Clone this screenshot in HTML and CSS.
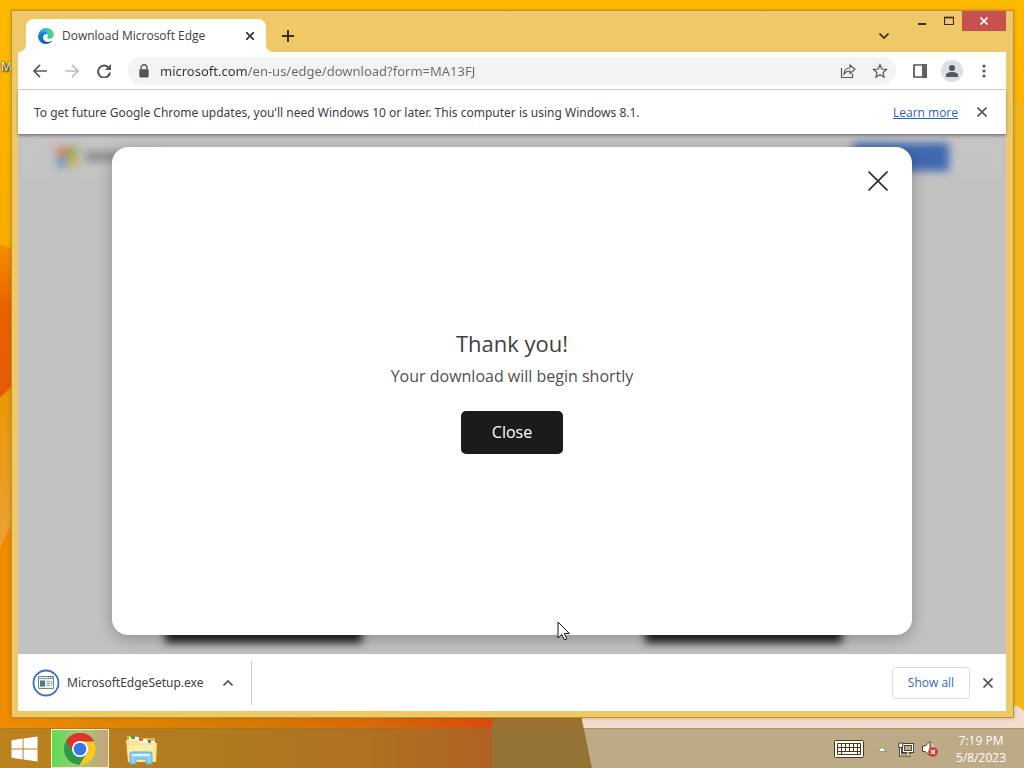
FILE: index.html
```html
<!DOCTYPE html>
<html lang="en">
<head>
<meta charset="utf-8">
<meta name="viewport" content="width=device-width, initial-scale=1">
<title>Download Microsoft Edge</title>
<link rel="stylesheet" href="styles.css">
</head>
<body>
<div class="desktop">
  <svg class="wallpaper" viewBox="0 0 1024 768" preserveAspectRatio="none" aria-hidden="true">
    <defs>
      <linearGradient id="sky" x1="0" y1="0" x2="0" y2="1"><stop offset="0" stop-color="#ffba00"/><stop offset=".3" stop-color="#f9ad00"/><stop offset="1" stop-color="#f3a400"/></linearGradient>
      <linearGradient id="flame" x1="0" y1="0" x2="0" y2="1"><stop offset="0" stop-color="#f59000"/><stop offset=".4" stop-color="#e96300"/><stop offset="1" stop-color="#e65a08"/></linearGradient>
      <linearGradient id="glow" x1="0" y1="0" x2="0" y2="1"><stop offset="0" stop-color="#eb9600"/><stop offset="1" stop-color="#eba238"/></linearGradient>
      <linearGradient id="ground" x1="0" y1="0" x2="1" y2="0"><stop offset="0" stop-color="#ef8c00"/><stop offset=".45" stop-color="#d97c00"/><stop offset=".75" stop-color="#d96a08"/><stop offset="1" stop-color="#d84d0c"/></linearGradient>
    </defs>
    <rect width="1024" height="768" fill="url(#sky)"/>
    <path d="M0 245Q12 246 22 254V380L0 398Z" fill="url(#flame)"/>
    <path d="M0 398 22 376V510L0 550Z" fill="url(#glow)"/>
    <path d="M0 548 22 500V700H492V768H0Z" fill="url(#ground)"/>
    <path d="M492 700H578L592 768H492Z" fill="#9f712f"/>
    <path d="M578 700H1014L1024 710V768H592Z" fill="#f3ddd0"/>
    <path d="M1012 100H1024V711Q1018 704 1012 706Z" fill="#f7b51c"/>
  </svg>
  <span class="desk-label" aria-hidden="true">M</span>

  <main class="workspace">
    <div class="window">
      <header class="titlebar">
        <div class="tab">
          <svg class="icon-16" viewBox="0 0 16 16" aria-hidden="true">
            <defs>
              <linearGradient id="ea" x1="0" y1="0" x2="1" y2="0"><stop offset="0" stop-color="#2a9fe0"/><stop offset=".55" stop-color="#2fc4c9"/><stop offset="1" stop-color="#62d957"/></linearGradient>
              <linearGradient id="eb" x1="0" y1="0" x2="1" y2="1"><stop offset="0" stop-color="#1690d8"/><stop offset="1" stop-color="#0c4a9c"/></linearGradient>
            </defs>
            <path d="M.3 7.3C.9 3 4.200 0 8.200 0c4.500 0 7.700 3.200 7.700 6.600 0 2.500-1.900 4.100-4.200 4.100-1.800 0-2.700-.5-2.700-1 0-.3.9-.7.9-2 0-1.700-1.600-3.300-4-3.300-2.600 0-4.600 1-5.600 2.900z" fill="url(#ea)"/>
            <path d="M0 8c.4-2.400 2.800-3.900 5.400-3.900 2 0 3.500.8 4.200 2C6.800 5.600 5 7.500 5 9.600c0 3 3 5.500 7.300 3.800.8-.3 1.500-.6 1.900-.3.300.3-2.400 2.900-6.200 2.900-4.700 0-8-3.500-8-8z" fill="url(#eb)"/>
          </svg>
          <span class="tab-title">Download Microsoft Edge</span>
          <button class="icon-button small" aria-label="Close tab"><svg class="icon-8" viewBox="0 0 8 8"><path d="M0 0 8 8M8 0 0 8" class="stroke dark"/></svg></button>
        </div>
        <button class="icon-button new-tab" aria-label="New tab"><svg class="icon-12" viewBox="0 0 12 12"><path d="M6 0V12M0 6H12" class="stroke brown thick"/></svg></button>
        <button class="icon-button tab-search" aria-label="Search tabs"><svg class="icon-10" viewBox="0 0 10 10"><path d="M.5 2.500 5 7 9.500 2.500" class="stroke brown"/></svg></button>
        <div class="caption">
          <button class="caption-button" aria-label="Minimize"><svg class="icon-10" viewBox="0 0 10 10"><path d="M1 8h8" class="stroke brown thick"/></svg></button>
          <button class="caption-button" aria-label="Maximize"><svg class="icon-10" viewBox="0 0 10 10"><path d="M.5 1.500h9v7h-9z" class="stroke brown thin"/><path d="M0 1.500h10" class="stroke brown"/></svg></button>
          <button class="caption-button close" aria-label="Close window"><svg class="icon-8" viewBox="0 0 8 8"><path d="M.5.5 7.500 7.500M7.500.5.5 7.500" class="stroke white"/></svg></button>
        </div>
      </header>

      <nav class="toolbar" aria-label="Browser toolbar">
        <button class="icon-button" aria-label="Back"><svg class="icon-14" viewBox="0 0 14 14"><path d="M14 7H1.500M7 .8.900 7 7 13.200" class="stroke grey"/></svg></button>
        <button class="icon-button" aria-label="Forward" disabled><svg class="icon-14" viewBox="0 0 14 14"><path d="M0 7h12.500M7 .8 13.100 7 7 13.200" class="stroke pale"/></svg></button>
        <button class="icon-button" aria-label="Reload"><svg class="icon-14" viewBox="0 0 14 14"><path d="M12 4.200A6 6 0 1 0 13 8.500" class="stroke grey thick"/><path d="M14 0v6H8z" fill="#54575b"/></svg></button>
        <div class="omnibox">
          <svg class="lock" viewBox="0 0 10 12" aria-hidden="true"><path d="M2.500 5V3.200a2.500 2.500 0 0 1 5 0V5" class="stroke grey thin"/><rect x="1" y="4.500" width="8" height="7" rx="1" fill="#505357"/></svg>
          <div class="address-wrap"><input class="address" type="text" aria-label="Address" value="microsoft.com/en-us/edge/download?form=MA13FJ" spellcheck="false"></div>
          <button class="icon-button" aria-label="Share"><svg class="icon-16" viewBox="0 0 16 16"><path d="M1.500 5v9.500h11v-4M4 11c.3-4 2.500-6 6-6V2l5 4.300-5 4.200V8C7.500 8 5.500 9 4 11z" class="stroke grey thin"/></svg></button>
          <button class="icon-button" aria-label="Bookmark this tab"><svg class="icon-16" viewBox="0 0 16 16"><path d="M8 1.800 9.800 6l4.700.4-3.500 3.100 1 4.600L8 11.700l-4 2.400 1-4.600L1.500 6.400 6.200 6z" class="stroke grey thin"/></svg></button>
        </div>
        <button class="icon-button" aria-label="Side panel"><svg class="icon-14" viewBox="0 0 14 14"><path d="M1 1h12v12H1z" class="stroke grey"/><path d="M9 0h5v14H9z" fill="#5f6368"/></svg></button>
        <button class="icon-button profile" aria-label="Profile"><svg class="icon-14" viewBox="0 0 14 14"><circle cx="7" cy="4" r="3" fill="#54585e"/><path d="M1 13v-2c0-2 3-3 6-3s6 1 6 3v2z" fill="#54585e"/></svg></button>
        <button class="icon-button" aria-label="Menu"><svg class="icon-14" viewBox="0 0 14 14"><g fill="#54575b"><circle cx="7" cy="2" r="1.600"/><circle cx="7" cy="7" r="1.600"/><circle cx="7" cy="12" r="1.600"/></g></svg></button>
      </nav>

      <aside class="infobar">
        <span class="infobar-text">To get future Google Chrome updates, you'll need Windows 10 or later. This computer is using Windows 8.1.</span>
        <a class="link" href="#learn">Learn more</a>
        <button class="icon-button small" aria-label="Dismiss"><svg class="icon-10" viewBox="0 0 10 10"><path d="M.5.5 9.500 9.500M9.500.5.500 9.500" class="stroke grey"/></svg></button>
      </aside>

      <section class="page">
        <div class="backdrop" aria-hidden="true">
          <div class="backdrop-header">
            <svg class="ms-logo" viewBox="0 0 20 20"><path fill="#d87555" d="M0 0h9.500v9.500H0z"/><path fill="#8ba33b" d="M10.500 0H20v9.500h-9.500z"/><path fill="#5599bf" d="M0 10.500h9.500V20H0z"/><path fill="#cfae48" d="M10.500 10.500H20V20h-9.500z"/></svg>
            <span class="backdrop-word"></span>
            <span class="backdrop-action"></span>
          </div>
          <div class="backdrop-footer"><span class="backdrop-pill"></span><span class="backdrop-pill"></span></div>
        </div>
        <div class="dialog" role="dialog" aria-labelledby="thanks">
          <button class="dialog-x" aria-label="Close dialog"><svg class="icon-20" viewBox="0 0 20 20"><path d="M.5.500 19.500 19.500M19.500.500.500 19.500" class="stroke dark"/></svg></button>
          <div class="dialog-body">
            <h1 class="dialog-title" id="thanks">Thank you!</h1>
            <p class="dialog-text">Your download will begin shortly</p>
            <button class="dialog-close">Close</button>
          </div>
        </div>
      </section>

      <footer class="downloads">
        <button class="download-item">
          <svg class="file-icon" viewBox="0 0 28 28" aria-hidden="true"><circle cx="14" cy="14" r="12.500" fill="#fff" stroke="#3a6dc4" stroke-width="1.800"/><path d="M6.500 7.500h15v12h-15z" fill="#edf2f3" stroke="#74858d"/><path d="M7 9.500h14" stroke="#8d9ca3"/><path d="M8 11.500h5v6H8z" fill="#41837b"/><path d="M14.500 12.500H18M14.500 14.500H18M14.500 16.500H18M19.500 12v4" stroke="#8aa5ac"/><path d="M16 8h1M18 8h1M20 8h1" stroke="#315e8f"/></svg>
          <span>MicrosoftEdgeSetup.exe</span>
          <svg class="icon-10" viewBox="0 0 10 10" aria-hidden="true"><path d="M.5 7.500 5 3 9.500 7.500" class="stroke grey"/></svg>
        </button>
        <button class="show-all">Show all</button>
        <button class="icon-button small" aria-label="Close downloads bar"><svg class="icon-10" viewBox="0 0 10 10"><path d="M.5.5 9.500 9.500M9.500.5.500 9.500" class="stroke grey"/></svg></button>
      </footer>
    </div>
  </main>

  <footer class="taskbar">
    <button class="task start" aria-label="Start"><svg class="windows" viewBox="0 0 28 26"><path fill="#fff" d="M.5 4 12 2.200V12.500H.5zM13 2 27.500 0V12.500H13zM.5 13.500H12V23.800L.5 22zM13 13.500H27.500V26L13 24z"/></svg></button>
    <button class="task active" aria-label="Google Chrome"><svg class="task-icon" viewBox="0 0 32 32"><circle cx="16" cy="16" r="16" fill="#2c9b49"/><path d="M2.100 8A16 16 0 0 1 29.900 8L16 9 9.500 19.500z" fill="#df3528"/><path d="M16 8.500H30.100A16 16 0 0 1 15.500 32L23 19.500z" fill="#fcc72b"/><circle cx="16" cy="16" r="8" fill="#fff"/><circle cx="16" cy="16" r="6.300" fill="#3478e5"/></svg></button>
    <button class="task" aria-label="File Explorer"><svg class="task-icon" viewBox="0 0 32 32"><path d="M1 3h9l2 2h17v7H1z" fill="#d8b64e"/><path d="M3 4h10v6H3zM12 6h9v5h-9zM20 8h9v5h-9z" fill="#fffbea"/><path d="M5 3h4v3H5z" fill="#3ba543"/><path d="M13 5h4v3h-4z" fill="#e46642"/><path d="M22 7h3v3h-3z" fill="#4c84bb"/><path d="M0 7h11l3 3h17l-1 19H2z" fill="#f8e590"/><path d="M2 12h27l-1 16H3z" fill="#fbedaa"/><path d="M4 31V21q0-2 2-2h18q2 0 2 2v10h-6v-5H10v5z" fill="#90cff0" stroke="#62a9d6"/><path d="M6 22h18" stroke="#d8f3ff" stroke-width="2"/></svg></button>
    <div class="tray">
      <button class="tray-button" aria-label="Touch keyboard"><svg class="keyboard" viewBox="0 0 30 18"><rect x=".5" y=".5" width="29" height="17" rx="1" fill="#fffaf0" stroke="#493a22"/><path d="M3.500 3.500h23v11h-23zM3.500 7.500h23M3.500 11.500h23M7.500 3.500v11M11.500 3.500v8M15.500 3.500v8M19.500 3.500v8M23.500 3.500v11" fill="none" stroke="#493a22"/></svg></button>
      <button class="tray-button" aria-label="Show hidden icons"><svg class="icon-10" viewBox="0 0 10 10"><path d="M.5 7.500 5 3 9.500 7.500z" fill="#fff" stroke="#77654a" stroke-width=".6"/></svg></button>
      <button class="tray-button" aria-label="Network"><svg class="icon-16" viewBox="0 0 16 16"><path d="M5.500 3.500h9v7h-9zM10 10.500v3M7 14h6M2.500 7v7H7" fill="none" stroke="#4b3b24" stroke-width="3"/><path d="M5.500 3.500h9v7h-9zM10 10.500v3M7 14h6M2.500 7v7H7" fill="none" stroke="#fff" stroke-width="1.200"/><path d="M.8 2h4v4.500h-4z" fill="#fff" stroke="#4b3b24"/></svg></button>
      <button class="tray-button" aria-label="Volume muted"><svg class="icon-16" viewBox="0 0 16 16"><path d="M.5 5H3l5-4.500v14L3 10.500H.5z" fill="#fff" stroke="#54442b"/><path d="M10 3.500q2 2 1.500 4" fill="none" stroke="#fff"/><circle cx="11" cy="11" r="4.800" fill="#d23a30"/><path d="m9 9 4 4m0-4-4 4" stroke="#fff" stroke-width="1.500"/></svg></button>
      <time class="clock" datetime="2023-05-08T19:19"><span>7:19 PM</span><span>5/8/2023</span></time>
    </div>
  </footer>
  <svg class="cursor" viewBox="0 0 14 20" aria-hidden="true"><path d="M1 1v16l3.800-3.600L7.400 19l2.400-1.100-2.500-5.400h5z" fill="#fff" stroke="#111"/></svg>
</div>
</body>
</html>
```
FILE: styles.css
```css
* { box-sizing: border-box; }
body { margin: 0; font-family: "Open Sans", "Noto Sans", sans-serif; font-size: 12px; color: #3c4043; }
button { margin: 0; padding: 0; border: 0; background: none; color: inherit; font: inherit; }
svg { display: block; flex: none; }

.desktop { position: relative; display: flex; flex-direction: column; min-height: 100vh; overflow: hidden; background: #f9ad00; }
.wallpaper { position: absolute; inset: 0; width: 100%; height: 100%; }
.desk-label { position: absolute; left: 1px; top: 58px; color: #fff; text-shadow: 1px 1px 2px #000, 0 0 2px #000; }
.workspace { position: relative; display: flex; flex: 1; padding: 10px 10px 10px 11px; }
.window { display: flex; flex: 1; flex-direction: column; min-width: 0; padding: 0 7px 6px 6px; border: 1px solid #bd902e; background: #efc968; box-shadow: 0 0 4px #805d1866; }

.stroke { fill: none; stroke-width: 1.7; }
.thin { stroke-width: 1.2; }
.thick { stroke-width: 2; }
.dark { stroke: #303236; }
.brown { stroke: #42280d; }
.grey { stroke: #54575b; }
.pale { stroke: #babcbe; }
.white { stroke: #fff; }
.icon-8 { width: 8px; height: 8px; }
.icon-10 { width: 10px; height: 10px; }
.icon-12 { width: 12px; height: 12px; }
.icon-14 { width: 14px; height: 14px; }
.icon-16 { width: 16px; height: 16px; }
.icon-20 { width: 20px; height: 20px; }
.icon-button { display: grid; flex: none; place-items: center; width: 32px; height: 28px; }
.small { width: 16px; height: 16px; }

.titlebar { display: flex; align-items: flex-end; height: 41px; padding-left: 8px; }
.tab { position: relative; display: flex; align-items: center; gap: 8px; width: 240px; height: 33px; padding: 0 8px 0 12px; border-radius: 8px 8px 0 0; background: #fff; }
.tab::before, .tab::after { content: ""; position: absolute; bottom: 0; width: 8px; height: 8px; }
.tab::before { left: -8px; background: radial-gradient(circle at 0 0, transparent 8px, #fff 8px); }
.tab::after { right: -8px; background: radial-gradient(circle at 100% 0, transparent 8px, #fff 8px); }
.tab-title { flex: 1; white-space: nowrap; }
.new-tab { width: 44px; height: 33px; }
.tab-search { margin-left: auto; height: 33px; }
.caption { display: flex; align-self: flex-start; margin-left: 8px; }
.caption-button { display: grid; place-items: center; width: 27px; height: 20px; }
.caption-button.close { width: 44px; background: #c75050; }

.toolbar { display: flex; align-items: center; height: 38px; padding: 0 6px; border-bottom: 1px solid #d8dadd; background: #fff; }
.omnibox { display: flex; flex: 1; align-items: center; min-width: 0; height: 28px; margin-left: 8px; margin-right: 8px; padding-left: 10px; border-radius: 14px; background: #f1f3f4; }
.lock { width: 12px; height: 14px; }
.address-wrap { flex: 1; min-width: 0; padding-left: 10px; }
.address { display: block; width: 100%; padding: 0; border: 0; outline: 0; color: transparent; background: linear-gradient(90deg, #303236 87px, #65696e 87px); background-clip: text; font: 13px/28px "Noto Sans", sans-serif; }
.profile { width: 22px; height: 22px; margin: 0 5px; border-radius: 50%; background: #dddfe6; }

.infobar { position: relative; z-index: 1; display: flex; align-items: center; gap: 16px; min-height: 45px; padding: 0 16px; border-bottom: 1px solid #888; background: #fff; box-shadow: 0 1px 3px #0005; }
.infobar-text { flex: 1; font-family: "Noto Sans", sans-serif; }
.link { color: #2467b5; text-decoration: underline; text-underline-offset: 1px; }

.page { position: relative; display: flex; flex: 1; justify-content: center; padding: 12px 94px 19px; overflow: hidden; background: #c2c2c2; }
.backdrop { position: absolute; inset: 0; display: flex; flex-direction: column; justify-content: space-between; filter: blur(4px); }
.backdrop-header { display: flex; align-items: center; gap: 8px; height: 44px; padding: 0 57px 0 39px; border-bottom: 1px solid #b8b8b8; background: #c4c4c4; }
.ms-logo { width: 20px; height: 20px; }
.backdrop-word { width: 80px; height: 9px; background: #888; }
.backdrop-action { width: 96px; height: 28px; margin-left: auto; background: #4068b0; }
.backdrop-footer { display: flex; justify-content: space-between; padding: 0 164px 11px 147px; }
.backdrop-pill { width: 197px; height: 30px; background: #222; }
.dialog { position: relative; display: flex; flex: 1; align-items: center; justify-content: center; border-radius: 16px; background: #fff; box-shadow: 0 4px 16px #0004; }
.dialog-x { position: absolute; top: 16px; right: 16px; display: grid; place-items: center; width: 36px; height: 36px; }
.dialog-body { display: flex; flex-direction: column; align-items: center; padding-bottom: 4px; }
.dialog-title { margin: 0; font-size: 22px; font-weight: 400; line-height: 36px; color: #404040; }
.dialog-text { margin: 0 0 20px; font-size: 16px; line-height: 30px; color: #505050; }
.dialog-close { width: 102px; height: 43px; border-radius: 5px; background: #1b1b1b; color: #fff; font-size: 16px; font-weight: 500; }

.downloads { display: flex; align-items: center; gap: 10px; min-height: 57px; padding: 0 10px 0 14px; background: #fff; }
.download-item { display: flex; align-items: center; gap: 7px; height: 44px; padding-right: 18px; border-right: 1px solid #c8cacc; font-family: "Noto Sans", sans-serif; }
.download-item .icon-10 { margin-left: 12px; }
.file-icon { width: 28px; height: 28px; }
.show-all { width: 78px; height: 32px; margin-left: auto; border: 1px solid #dadce0; border-radius: 4px; color: #3269b2; font-weight: 500; }

.taskbar { position: relative; display: flex; align-items: center; min-height: 40px; padding-left: 1px; border-top: 1px solid #8b6c3a55; background: #87783c80; }
.task { display: grid; place-items: center; width: 58px; height: 39px; margin-right: 4px; }
.start { width: 46px; }
.active { border: 1px solid #fff3b5; background: linear-gradient(90deg, #5bdc55, #a9c77c 50%, #c6a17c); }
.windows { width: 27px; height: 26px; }
.task-icon { width: 32px; height: 32px; }
.tray { display: flex; align-items: center; margin-left: auto; padding-right: 18px; color: #fff; }
.tray-button { display: grid; place-items: center; width: 24px; height: 32px; }
.tray-button:first-child { width: 30px; margin-right: 6px; }
.keyboard { width: 30px; height: 18px; }
.clock { display: flex; flex-direction: column; align-items: center; margin-left: 14px; line-height: 17px; }
.cursor { position: absolute; left: 54.4%; top: 621px; width: 14px; height: 20px; }
```
